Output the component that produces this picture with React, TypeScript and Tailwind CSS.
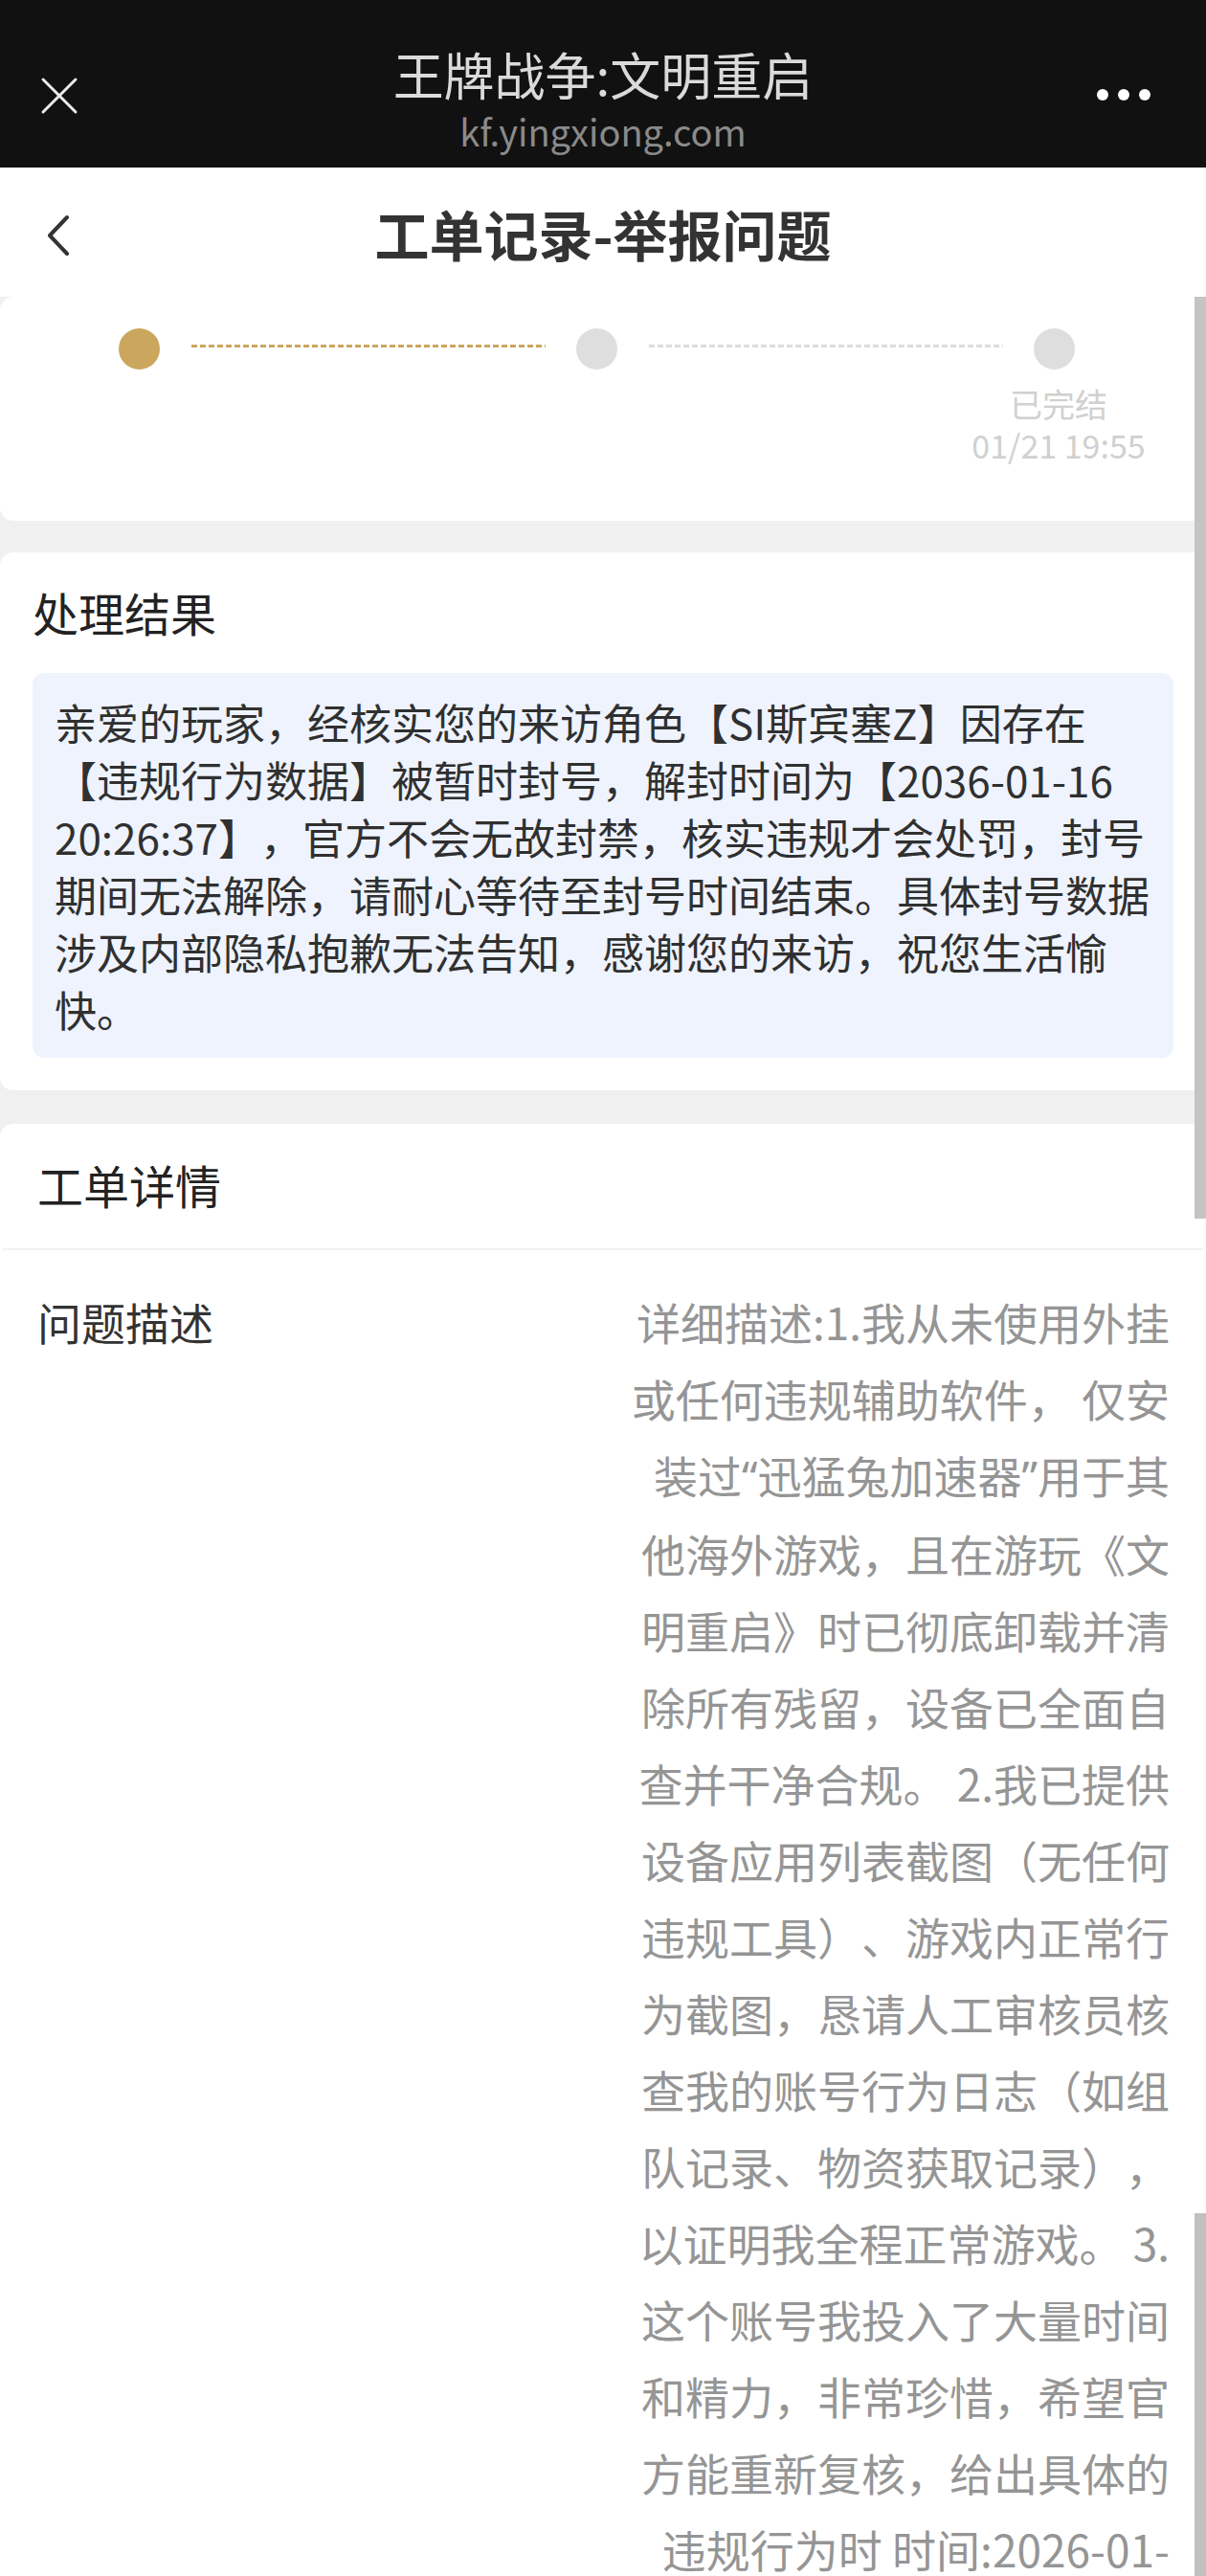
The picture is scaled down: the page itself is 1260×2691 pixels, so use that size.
import React from 'react';

const resultLines = [
  '亲爱的玩家，经核实您的来访角色【SI斯宾塞Z】因存在',
  '【违规行为数据】被暂时封号，解封时间为【2036-01-16',
  '20:26:37】，官方不会无故封禁，核实违规才会处罚，封号',
  '期间无法解除，请耐心等待至封号时间结束。具体封号数据',
  '涉及内部隐私抱歉无法告知，感谢您的来访，祝您生活愉',
  '快。',
];

const descLines = [
  '详细描述:1.我从未使用外挂',
  '或任何违规辅助软件， 仅安',
  '装过“迅猛兔加速器”用于其',
  '他海外游戏，且在游玩《文',
  '明重启》时已彻底卸载并清',
  '除所有残留，设备已全面自',
  '查并干净合规。 2.我已提供',
  '设备应用列表截图（无任何',
  '违规工具）、游戏内正常行',
  '为截图，恳请人工审核员核',
  '查我的账号行为日志（如组',
  '队记录、物资获取记录），',
  '以证明我全程正常游戏。 3.',
  '这个账号我投入了大量时间',
  '和精力，非常珍惜，希望官',
  '方能重新复核，给出具体的',
  '违规行为时 时间:2026-01-',
];

// curly quotes are drawn narrow (latin width) in the reference
const renderLine = (line: string) =>
  line.split(/([“”])/).map((part, i) =>
    part === '“' || part === '”' ? (
      <span key={i} className="font-['Noto_Sans',sans-serif]">{part}</span>
    ) : (
      <React.Fragment key={i}>{part}</React.Fragment>
    )
  );

const App: React.FC = () => {
  return (
    <div className="relative w-[1260px] min-h-[2691px] bg-[#f0f0f0] font-['Noto_Sans_CJK_SC','Noto_Sans',sans-serif] [text-spacing-trim:space-all] overflow-hidden">
      {/* webview top bar */}
      <header className="flex h-[175px] bg-[#111111]">
        <div className="w-[200px] pl-[40px] pt-[78px]">
          <svg width="44" height="44" viewBox="0 0 44 44" fill="none">
            <path d="M5 5 L39 39 M39 5 L5 39" stroke="#ececec" strokeWidth="3" strokeLinecap="round" />
          </svg>
        </div>
        <div className="flex-1 flex flex-col items-center pt-[48px]">
          <div className="text-[53px] leading-[58px] text-[#dadada] whitespace-nowrap">王牌战争:文明重启</div>
          <div className="mt-[10px] text-[38px] leading-[42px] text-[#8a8a8a] whitespace-nowrap">kf.yingxiong.com</div>
        </div>
        <div className="w-[200px] flex justify-end gap-[10px] pr-[58px] pt-[93px]">
          <span className="w-[12px] h-[12px] rounded-full bg-white" />
          <span className="w-[12px] h-[12px] rounded-full bg-white" />
          <span className="w-[12px] h-[12px] rounded-full bg-white" />
        </div>
      </header>

      {/* page nav */}
      <nav className="flex items-center h-[135px] bg-white">
        <div className="w-[200px] pl-[48px] pt-[6px]">
          <svg width="26" height="44" viewBox="0 0 26 44" fill="none">
            <path d="M22 3 L4 22 L22 41" stroke="#333333" strokeWidth="4" strokeLinecap="round" strokeLinejoin="round" />
          </svg>
        </div>
        <h1 className="flex-1 text-center text-[57px] leading-[64px] font-bold text-[#333333] whitespace-nowrap">工单记录-举报问题</h1>
        <div className="w-[200px]" />
      </nav>

      {/* progress card */}
      <section className="bg-white rounded-[14px] pt-[33px] pb-[58px]">
        <div className="flex items-center pl-[124px]">
          <span className="w-[43px] h-[43px] rounded-full bg-[#cba65d]" />
          <span className="ml-[33px] w-[370px] h-[3px] -mt-[6px] bg-[repeating-linear-gradient(90deg,#cba65d_0_6px,transparent_6px_9px)]" />
          <span className="ml-[32px] w-[43px] h-[43px] rounded-full bg-[#dedede]" />
          <span className="ml-[33px] w-[370px] h-[3px] -mt-[6px] bg-[repeating-linear-gradient(90deg,#dcdcdc_0_6px,transparent_6px_9px)]" />
          <span className="ml-[32px] w-[43px] h-[43px] rounded-full bg-[#dedede]" />
        </div>
        <div className="flex justify-end pr-[34px] mt-[14px]">
          <div className="w-[240px] text-center text-[34px] leading-[43px] text-[#d0d0d0]">
            <div>已完结</div>
            <div>01/21 19:55</div>
          </div>
        </div>
      </section>

      {/* result card */}
      <section className="mt-[33px] bg-white rounded-[14px] px-[34px] pt-[32px] pb-[34px]">
        <h2 className="text-[48px] leading-[60px] text-[#222222]">处理结果</h2>
        <div className="mt-[34px] rounded-[12px] bg-[#eef3fd] px-[23px] py-[21px] text-[44px] leading-[60px] text-[#303030]">
          {resultLines.map((line) => (
            <div key={line} className="whitespace-nowrap">{line}</div>
          ))}
        </div>
      </section>

      {/* detail card */}
      <section className="mt-[35px] bg-white rounded-t-[14px] pb-[40px]">
        <h2 className="pl-[39px] pt-[33px] pb-[37px] text-[48px] leading-[60px] text-[#222222]">工单详情</h2>
        <div className="mx-[3px] h-[2px] bg-[#f2f2f2]" />
        <div className="flex justify-between pt-[34px] pl-[39px] pr-[38px]">
          <div className="text-[46px] leading-[80px] text-[#333333] whitespace-nowrap">问题描述</div>
          <div className="text-right text-[46px] leading-[80px] text-[#959595]">
            {descLines.map((line) => (
              <div key={line} className="whitespace-nowrap">{renderLine(line)}</div>
            ))}
          </div>
        </div>
      </section>

      {/* scrollbar thumbs */}
      <div className="absolute right-0 top-[310px] w-[12px] h-[963px] bg-[#c4c4c4]" />
      <div className="absolute right-0 top-[2312px] w-[12px] h-[400px] bg-[#c0c0c0]" />
    </div>
  );
};

export default App;
